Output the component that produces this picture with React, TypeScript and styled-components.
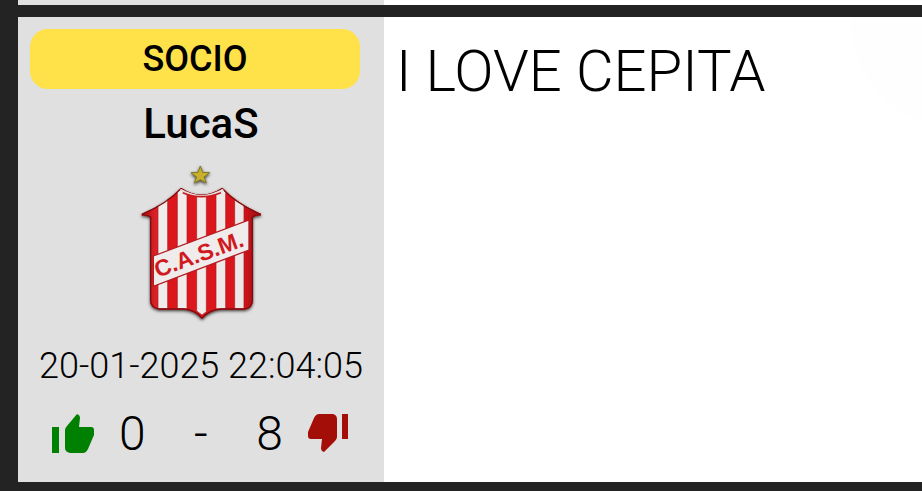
import React from "react";
import styled, { createGlobalStyle } from "styled-components";

const GlobalStyle = createGlobalStyle`
  * { box-sizing: border-box; }
  html, body { margin: 0; background: #232323; }
  body {
    font-family: Roboto, "Liberation Sans", sans-serif;
    font-weight: 300;
    color: #000;
  }
`;

const Thread = styled.main`
  display: flex;
  flex-direction: column;
  gap: 12px;
  padding: 0 0 9px 18px;
`;

const Post = styled.article`
  display: grid;
  grid-template-columns: 366px 1fr;
  background: #fff;
`;

const PostEnd = styled(Post)`
  height: 5px;
`;

const PostEndSide = styled.div`
  background: #e0e0e0;
`;

const Author = styled.aside`
  display: flex;
  flex-direction: column;
  align-items: center;
  padding: 12px 0 20px;
  background: #e0e0e0;
`;

const Badge = styled.div`
  align-self: stretch;
  margin: 0 24px 0 12px;
  border-radius: 18px;
  background: #ffe14a;
  font-size: 36px;
  font-weight: 500;
  line-height: 60px;
  text-align: center;
`;

const Name = styled.h2`
  margin: 8px 0 0;
  font-size: 42px;
  font-weight: 500;
  line-height: 54px;
`;

const Crest = styled.svg`
  display: block;
  width: 142px;
  height: 175px;
  margin-top: 4px;
`;

const Posted = styled.time`
  margin-top: 14px;
  font-size: 36px;
  line-height: 44px;
  white-space: nowrap;
`;

const Votes = styled.div`
  display: flex;
  align-self: stretch;
  align-items: center;
  justify-content: space-between;
  margin-top: 18px;
  padding: 0 34px;
  font-size: 48px;
  line-height: 56px;
`;

const VoteButton = styled.button`
  display: flex;
  align-items: center;
  gap: 24px;
  padding: 0;
  border: 0;
  background: none;
  color: inherit;
  font: inherit;
  cursor: pointer;
`;

const Thumb = styled.svg<{ $tone: string }>`
  display: block;
  width: 43px;
  height: 40px;
  fill: ${(p) => p.$tone};
`;

const Message = styled.div`
  padding: 20px 12px;
  background: radial-gradient(circle at calc(100% + 40px) 0, #fefefe 112px, #fff 113px);
`;

const MessageText = styled.p`
  margin: 0;
  font-size: 58px;
  line-height: 68px;
`;

const shield =
  "M153 98 Q214 139 277 98 Q322 146 393 176 L392 182 Q379 181 369 187 V435 Q368 462 343 464 H273 Q238 466 216 492 Q194 465 160 464 H88 Q60 460 60 435 V187 Q49 181 35 182 V176 Q108 146 153 98Z";

function ClubCrest() {
  return (
    <Crest viewBox="0 0 426 525" role="img" aria-label="C.A.S.M.">
      <defs>
        <clipPath id="shield"><path d={shield} /></clipPath>
        <linearGradient id="shade" x1="0" x2="1">
          <stop offset="0.06" stopColor="#500" stopOpacity="0.2" />
          <stop offset="0.16" stopColor="#fff" stopOpacity="0" />
          <stop offset="0.84" stopColor="#300" stopOpacity="0.02" />
          <stop offset="0.94" stopColor="#500" stopOpacity="0.3" />
        </linearGradient>
        <filter id="shadow" x="-20%" y="-20%" width="140%" height="140%">
          <feDropShadow dx="0" dy="4" stdDeviation="5" floodColor="#222" floodOpacity="0.9" />
        </filter>
      </defs>
      <path
        d="M211 33 L218 52 L239 53 L222 66 L229 84 L211 74 L193 84 L200 66 L183 53 L204 52Z"
        fill="#c9b02b" stroke="#80762c" strokeWidth="3" filter="url(#shadow)"
      />
      <path d={shield} fill="#dc161b" filter="url(#shadow)" />
      <g clipPath="url(#shield)">
        <g fill="#f0ecec" stroke="#b3181d" strokeWidth="2">
          <path d="M84 146 L113 129 V461 H84Z" />
          <path d="M142 110 L152 102 L171 118 V461 H142Z" />
          <path d="M200 124 H229 V470 L216 480 L200 468Z" />
          <path d="M258 118 L277 102 L287 112 V461 H258Z" />
          <path d="M314 134 L342 151 V461 H314Z" />
        </g>
        <path d={shield} fill="url(#shade)" />
        <path d={shield} fill="none" stroke="#7d0d11" strokeWidth="8" />
        <path d="M151 104 Q214 141 280 104" fill="none" stroke="#e6dede" strokeWidth="6" />
        <path d="M158 113 Q214 137 273 113" fill="none" stroke="#c41c21" strokeWidth="5" />
      </g>
      <path d="M70 303 L357 195 V285 L70 394Z" fill="#f0ecec" stroke="#b51c22" strokeWidth="4" />
      <text
        transform="translate(83 368) rotate(-20)"
        fill="#d01a20" fontFamily="Liberation Sans, sans-serif" fontSize="69" fontWeight="700"
      >
        C.A.S.M.
      </text>
    </Crest>
  );
}

function ThumbUp() {
  return (
    <Thumb $tone="#008000" viewBox="0 0 43 40" aria-hidden="true">
      <path d="M0 13h7v26H0zM13 16q0-2 2-4L25 0q3 1 3 4l-1 9h12q3 0 3 3v5l-6 14q-2 4-5 4H18q-5-1-5-5z" />
    </Thumb>
  );
}

function ThumbDown() {
  return (
    <Thumb $tone="#a30f08" viewBox="0 0 43 40" aria-hidden="true">
      <path d="M35 0h6v25h-6zM12 0h14q4 1 4 5v18q0 2-2 4L17 38q-3-1-3-4l1-9H4q-3 0-3-3v-4L7 4q2-4 5-4z" />
    </Thumb>
  );
}

export default function App() {
  return (
    <>
      <GlobalStyle />
      <Thread>
        <PostEnd as="div" aria-hidden="true"><PostEndSide /></PostEnd>
        <Post>
          <Author>
            <Badge>SOCIO</Badge>
            <Name>LucaS</Name>
            <ClubCrest />
            <Posted dateTime="2025-01-20T22:04:05">20-01-2025 22:04:05</Posted>
            <Votes>
              <VoteButton type="button" aria-label="Me gusta: 0"><ThumbUp />0</VoteButton>
              <span>-</span>
              <VoteButton type="button" aria-label="No me gusta: 8">8<ThumbDown /></VoteButton>
            </Votes>
          </Author>
          <Message>
            <MessageText>I LOVE CEPITA</MessageText>
          </Message>
        </Post>
      </Thread>
    </>
  );
}
